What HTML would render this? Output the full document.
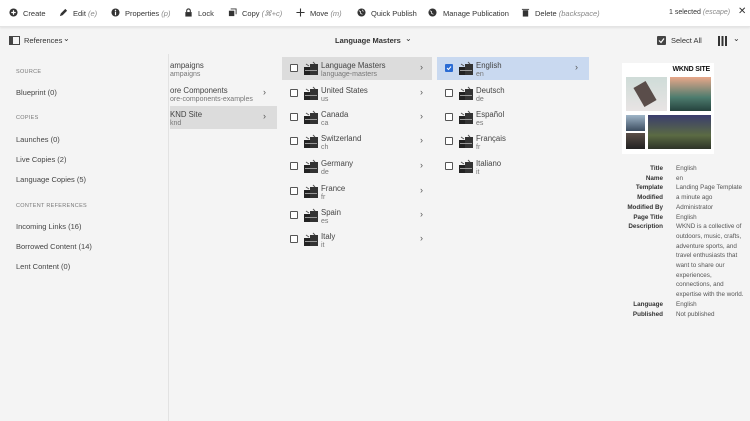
<!DOCTYPE html>
<html><head><meta charset="utf-8">
<style>
*{margin:0;padding:0;box-sizing:border-box}
body{width:750px;height:421px;overflow:hidden;background:#f4f4f4;font-family:"Liberation Sans",sans-serif;color:#4b4b4b;position:relative;font-size:7.5px}
.tb{position:absolute;left:0;top:0;width:750px;height:27px;background:#fff;border-bottom:1px solid #e4e4e4;box-shadow:0 1px 2px rgba(0,0,0,.08)}
.tb span{position:absolute;top:9px;font-size:7.5px;color:#333;white-space:nowrap}
.tb i{font-style:italic;color:#888}
.ic{position:absolute;top:8px;width:9px;height:9px}
.bar2{position:absolute;top:28px;left:0;width:750px;height:26px}
.bar2 span{position:absolute;top:8px;font-size:7.5px;color:#333;white-space:nowrap}
.left{position:absolute;left:0;top:54px;width:169px;height:367px;border-right:1px solid #e2e2e2;background:#f4f4f4}
.left div{position:absolute;left:16px;white-space:nowrap}
.h{font-size:5.5px;color:#777;letter-spacing:.3px}
.l{font-size:7.5px;color:#444}
.row{position:absolute;height:23px}
.row .t{position:absolute;top:4px;font-size:7.8px;color:#444;white-space:nowrap}
.row .s{position:absolute;top:14px;font-size:7px;color:#777;white-space:nowrap}
.cb{position:absolute;left:8px;top:7px;width:8px;height:8px;border:1px solid #555;border-radius:1px;background:#fff}
.thumb{position:absolute;left:22px;top:4px;width:14px;height:14px}
.ch{position:absolute;top:5px;font-size:9px;color:#555}
.meta{position:absolute;top:164px;font-size:6.3px;line-height:9.7px}
</style></head><body>
<div class="tb">
 <svg class="ic" style="left:9px" viewBox="0 0 10 10"><circle cx="5" cy="5" r="4.5" fill="#333"/><path d="M5 2.5v5M2.5 5h5" stroke="#fff" stroke-width="1.3"/></svg><span style="left:23px">Create</span>
 <svg class="ic" style="left:59px" viewBox="0 0 10 10"><path d="M1 9l1-3 5-5 2 2-5 5z" fill="#333"/></svg><span style="left:73px">Edit <i>(e)</i></span>
 <svg class="ic" style="left:111px" viewBox="0 0 10 10"><circle cx="5" cy="5" r="4.5" fill="#333"/><path d="M5 4v4" stroke="#fff" stroke-width="1.3"/><circle cx="5" cy="2.7" r=".8" fill="#fff"/></svg><span style="left:125px">Properties <i>(p)</i></span>
 <svg class="ic" style="left:184px" viewBox="0 0 10 10"><rect x="1.5" y="4.5" width="7" height="5" fill="#333"/><path d="M3 4.5V3a2 2 0 014 0v1.5" stroke="#333" fill="none" stroke-width="1.2"/></svg><span style="left:198px">Lock</span>
 <svg class="ic" style="left:228px" viewBox="0 0 10 10"><rect x="1" y="3" width="6" height="6" fill="#333"/><path d="M3 1h6v6" stroke="#333" fill="none"/></svg><span style="left:242px">Copy <i>(⌘+c)</i></span>
 <svg class="ic" style="left:296px" viewBox="0 0 10 10"><path d="M5 .5v9M.5 5h9" stroke="#333" stroke-width="1.2"/></svg><span style="left:310px">Move <i>(m)</i></span>
 <svg class="ic" style="left:357px" viewBox="0 0 10 10"><circle cx="5" cy="5" r="4.5" fill="#333"/><path d="M2 3l2 1 0 2 2 1M6 2l1 2" stroke="#fff" stroke-width=".8" fill="none"/></svg><span style="left:371px">Quick Publish</span>
 <svg class="ic" style="left:428px" viewBox="0 0 10 10"><circle cx="5" cy="5" r="4.5" fill="#333"/><path d="M2 3l2 1 0 2 2 1" stroke="#fff" stroke-width=".8" fill="none"/></svg><span style="left:443px">Manage Publication</span>
 <svg class="ic" style="left:521px" viewBox="0 0 10 10"><rect x="2" y="2.5" width="6" height="7" fill="#333"/><rect x="1" y="1" width="8" height="1" fill="#333"/></svg><span style="left:535px">Delete <i>(backspace)</i></span>
 <span style="left:669px;font-size:7px">1 selected <i>(escape)</i></span><span style="left:738px;top:6px;font-size:10px">✕</span>
</div>
<div class="bar2">
 <svg style="position:absolute;left:9px;top:8px" width="11" height="9" viewBox="0 0 11 9"><rect x=".5" y=".5" width="10" height="8" fill="none" stroke="#444"/><rect x=".5" y=".5" width="3.5" height="8" fill="#444"/></svg>
 <span style="left:24px">References</span><span style="left:63px;top:6px;font-size:8px">⌄</span>
 <span style="left:335px;font-weight:bold;color:#333">Language Masters</span><span style="left:405px;top:6px;font-size:8px">⌄</span>
 <svg style="position:absolute;left:657px;top:8px" width="9" height="9" viewBox="0 0 9 9"><rect width="9" height="9" rx="1" fill="#444"/><path d="M2 4.5l2 2 3-4" stroke="#fff" fill="none" stroke-width="1.2"/></svg>
 <span style="left:671px">Select All</span>
 <svg style="position:absolute;left:718px;top:8px" width="9" height="10" viewBox="0 0 9 10"><rect x="0" width="2" height="10" fill="#333"/><rect x="3.5" width="2" height="10" fill="#333"/><rect x="7" width="2" height="10" fill="#333"/></svg>
 <span style="left:733px;top:6px;font-size:8px">⌄</span>
</div>
<div class="left">
 <div class="h" style="top:15px">SOURCE</div>
 <div class="l" style="top:34px">Blueprint (0)</div>
 <div class="h" style="top:61px">COPIES</div>
 <div class="l" style="top:81px">Launches (0)</div>
 <div class="l" style="top:101px">Live Copies (2)</div>
 <div class="l" style="top:121px">Language Copies (5)</div>
 <div class="h" style="top:149px">CONTENT REFERENCES</div>
 <div class="l" style="top:168px">Incoming Links (16)</div>
 <div class="l" style="top:188px">Borrowed Content (14)</div>
 <div class="l" style="top:208px">Lent Content (0)</div>
</div>
<div class="row" style="left:170px;top:57px;width:108px"><div class="t" style="left:0">ampaigns</div><div class="s" style="left:0">ampaigns</div></div>
<div class="row" style="left:170px;top:82px;width:108px"><div class="t" style="left:0">ore Components</div><div class="s" style="left:0">ore-components-examples</div><div class="ch" style="left:93px">›</div></div>
<div class="row" style="left:170px;top:106px;width:107px;background:#dcdcdc"><div class="t" style="left:0">KND Site</div><div class="s" style="left:0">knd</div><div class="ch" style="left:93px">›</div></div>
<div id="c"></div>
<script>
function th(){return '<svg class="thumb" viewBox="0 0 14 14"><rect x="0" y="6" width="6" height="8" fill="#222"/><rect x="6" y="3" width="8" height="11" fill="#333"/><rect x="1" y="9" width="12" height="1" fill="#999"/><path d="M2 3l3 2M9 1l2 2" stroke="#555"/></svg>';}
var c2=[["Language Masters","language-masters"],["United States","us"],["Canada","ca"],["Switzerland","ch"],["Germany","de"],["France","fr"],["Spain","es"],["Italy","it"]];
var c3=[["English","en"],["Deutsch","de"],["Español","es"],["Français","fr"],["Italiano","it"]];
var tops=[57,82,106,130,155,180,204,228],h='';
c2.forEach(function(r,i){h+='<div class="row" style="left:282px;top:'+tops[i]+'px;width:150px;'+(i==0?'background:#dcdcdc':'')+'"><div class="cb"></div>'+th()+'<div class="t" style="left:39px">'+r[0]+'</div><div class="s" style="left:39px">'+r[1]+'</div><div class="ch" style="left:138px">›</div></div>';});
c3.forEach(function(r,i){h+='<div class="row" style="left:437px;top:'+tops[i]+'px;width:152px;'+(i==0?'background:#c9d9f0':'')+'">'+(i==0?'<div class="cb" style="background:#2b6cd4;border-color:#2b6cd4"><svg width="6" height="6" viewBox="0 0 6 6" style="position:absolute;left:0;top:0"><path d="M1 3l1.5 1.5L5 1.5" stroke="#fff" fill="none"/></svg></div>':'<div class="cb"></div>')+th()+'<div class="t" style="left:39px">'+r[0]+'</div><div class="s" style="left:39px">'+r[1]+'</div>'+(i==0?'<div class="ch" style="left:138px">›</div>':'')+'</div>';});
document.getElementById('c').innerHTML=h;
</script>
<div style="position:absolute;left:622px;top:63px;width:92px;height:91px;background:#fff">
 <div style="position:absolute;right:4px;top:3px;font-size:7px;font-weight:bold;color:#111;letter-spacing:-.2px">WKND SITE</div>
 <div style="position:absolute;left:4px;top:14px;width:41px;height:34px;background:linear-gradient(#cfdcd8,#e8e4e4)"><div style="position:absolute;left:12px;top:6px;width:14px;height:22px;background:#5a4d4a;transform:rotate(-30deg)"></div></div>
 <div style="position:absolute;left:48px;top:14px;width:41px;height:34px;background:linear-gradient(#e8a78a,#4d7c6e 60%,#24423d)"></div>
 <div style="position:absolute;left:4px;top:52px;width:19px;height:16px;background:linear-gradient(#9fb5c8,#3c4d60)"></div>
 <div style="position:absolute;left:4px;top:70px;width:19px;height:16px;background:linear-gradient(#5a4e47,#222)"></div>
 <div style="position:absolute;left:26px;top:52px;width:63px;height:34px;background:linear-gradient(#3a3d6e,#5b6b43 60%,#2d3328)"></div>
</div>
<div class="meta" style="left:600px;width:63px;text-align:right;color:#333;font-weight:bold">Title<br>Name<br>Template<br>Modified<br>Modified By<br>Page Title<br>Description<br><br><br><br><br><br><br><br>Language<br>Published</div>
<div class="meta" style="left:676px;width:74px;color:#555">English<br>en<br>Landing Page Template<br>a minute ago<br>Administrator<br>English<br>WKND is a collective of<br>outdoors, music, crafts,<br>adventure sports, and<br>travel enthusiasts that<br>want to share our<br>experiences,<br>connections, and<br>expertise with the world.<br>English<br>Not published</div>
</body></html>
